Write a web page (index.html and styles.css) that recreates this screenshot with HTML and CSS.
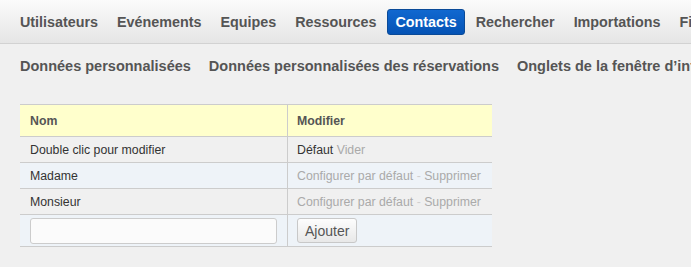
FILE: index.html
```html
<!DOCTYPE html>
<html lang="fr">

<head>
    <meta charset="UTF-8">
    <title>Contacts</title>
    <link rel="stylesheet" href="styles.css">
</head>

<body>
    <div class="menu">
        <a class="menu-item" href="#">Utilisateurs</a>
        <a class="menu-item" href="#">Evénements</a>
        <a class="menu-item" href="#">Equipes</a>
        <a class="menu-item" href="#">Ressources</a>
        <a class="menu-item active" href="#">Contacts</a>
        <a class="menu-item" href="#">Rechercher</a>
        <a class="menu-item" href="#">Importations</a>
        <a class="menu-item" href="#">Fichiers</a>
    </div>

    <div class="submenu">
        <a class="submenu-item" href="#">Données personnalisées</a>
        <a class="submenu-item" href="#">Données personnalisées des réservations</a>
        <a class="submenu-item" href="#">Onglets de la fenêtre d’informations</a>
    </div>

    <table class="list">
        <thead>
            <tr>
                <th class="col-name">Nom</th>
                <th>Modifier</th>
            </tr>
        </thead>
        <tbody>
            <tr>
                <td>Double clic pour modifier</td>
                <td><span class="dark">Défaut</span> <a class="link" href="#">Vider</a></td>
            </tr>
            <tr class="alt">
                <td>Madame</td>
                <td><a class="link" href="#">Configurer par défaut</a> <span class="sep">-</span> <a class="link" href="#">Supprimer</a></td>
            </tr>
            <tr>
                <td>Monsieur</td>
                <td><a class="link" href="#">Configurer par défaut</a> <span class="sep">-</span> <a class="link" href="#">Supprimer</a></td>
            </tr>
            <tr class="alt add-row">
                <td><input type="text" class="add-input"></td>
                <td><button class="add-button">Ajouter</button></td>
            </tr>
        </tbody>
    </table>
</body>

</html>
```

FILE: styles.css
```css
body {
    font-family: "Liberation Sans", Arial, sans-serif;
    margin: 0;
    padding: 0;
    background-color: #f0f0f0;
    color: #333;
    overflow: hidden;
}

.menu {
    display: flex;
    align-items: center;
    gap: 3px;
    height: 43px;
    padding-left: 12px;
    background: linear-gradient(#fbfbfb, #e5e5e5);
    border-bottom: 1px solid #d2d2d2;
    white-space: nowrap;
}

.menu-item {
    font-size: 14.33px;
    font-weight: bold;
    color: #555;
    text-decoration: none;
    padding: 0 7px;
    height: 24px;
    line-height: 24px;
    border: 1px solid transparent;
    border-radius: 3px;
}

.menu-item.active {
    color: #fff;
    background: linear-gradient(#1168d0, #0553b5);
    border-color: #0a4a98;
}

.submenu {
    display: flex;
    gap: 18px;
    padding: 14px 0 0 20px;
    height: 46px;
    box-sizing: border-box;
    white-space: nowrap;
}

.submenu-item {
    font-size: 14.5px;
    font-weight: bold;
    color: #555;
    text-decoration: none;
}

.list {
    margin: 14px 0 0 20px;
    width: 472px;
    border-collapse: collapse;
    font-size: 12.3px;
}

.list th,
.list td {
    text-align: left;
    padding: 0 10px;
    border-top: 1px solid #ccc;
    border-bottom: 1px solid #ccc;
}

.list th + th,
.list td + td {
    border-left: 1px solid #ccc;
    padding-left: 9px;
}

.list th {
    height: 31px;
    background-color: #ffffcc;
    color: #555;
    font-weight: bold;
}

.list td {
    height: 25px;
}

.col-name {
    width: 244px;
}

.list tr.alt td {
    background-color: #eef3f8;
}

.dark {
    color: #333;
}

.link {
    color: #aaa;
    text-decoration: none;
}

.sep {
    color: #d0d0d0;
}

.add-row td {
    height: 31px;
}

.add-input {
    display: block;
    box-sizing: border-box;
    width: 247px;
    height: 26px;
    margin: 0;
    border: 1px solid #ccc;
    border-radius: 3px;
    background-color: #fbfbfb;
}

.add-button {
    display: block;
    height: 25px;
    padding: 0 7px;
    font-family: "Liberation Sans", Arial, sans-serif;
    font-size: 14px;
    color: #555;
    background: linear-gradient(#fdfdfd, #e8e8e8);
    border: 1px solid #c8c8c8;
    border-radius: 3px;
}
```
